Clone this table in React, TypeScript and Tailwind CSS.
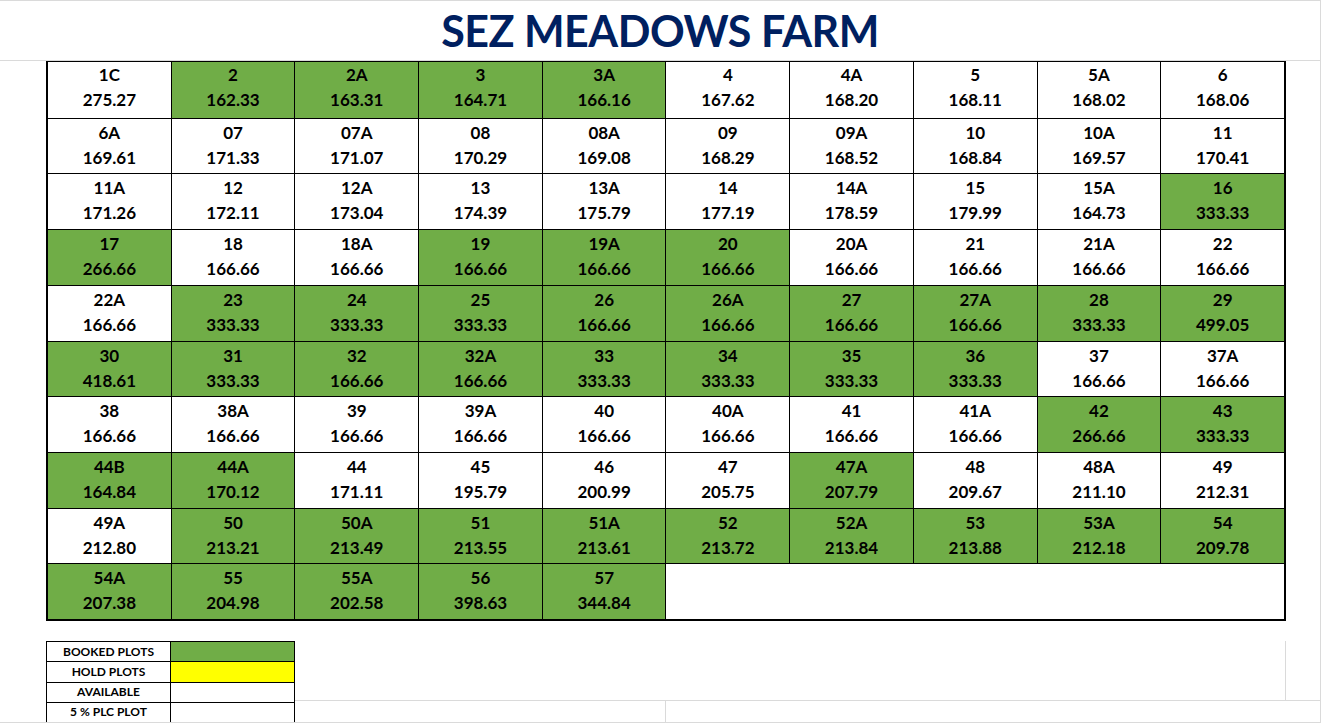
import React from 'react'

type Plot = { no: string; area: string; booked?: boolean }

const G = true

const rows: Plot[][] = [
  [
    { no: '1C', area: '275.27' },
    { no: '2', area: '162.33', booked: G },
    { no: '2A', area: '163.31', booked: G },
    { no: '3', area: '164.71', booked: G },
    { no: '3A', area: '166.16', booked: G },
    { no: '4', area: '167.62' },
    { no: '4A', area: '168.20' },
    { no: '5', area: '168.11' },
    { no: '5A', area: '168.02' },
    { no: '6', area: '168.06' },
  ],
  [
    { no: '6A', area: '169.61' },
    { no: '07', area: '171.33' },
    { no: '07A', area: '171.07' },
    { no: '08', area: '170.29' },
    { no: '08A', area: '169.08' },
    { no: '09', area: '168.29' },
    { no: '09A', area: '168.52' },
    { no: '10', area: '168.84' },
    { no: '10A', area: '169.57' },
    { no: '11', area: '170.41' },
  ],
  [
    { no: '11A', area: '171.26' },
    { no: '12', area: '172.11' },
    { no: '12A', area: '173.04' },
    { no: '13', area: '174.39' },
    { no: '13A', area: '175.79' },
    { no: '14', area: '177.19' },
    { no: '14A', area: '178.59' },
    { no: '15', area: '179.99' },
    { no: '15A', area: '164.73' },
    { no: '16', area: '333.33', booked: G },
  ],
  [
    { no: '17', area: '266.66', booked: G },
    { no: '18', area: '166.66' },
    { no: '18A', area: '166.66' },
    { no: '19', area: '166.66', booked: G },
    { no: '19A', area: '166.66', booked: G },
    { no: '20', area: '166.66', booked: G },
    { no: '20A', area: '166.66' },
    { no: '21', area: '166.66' },
    { no: '21A', area: '166.66' },
    { no: '22', area: '166.66' },
  ],
  [
    { no: '22A', area: '166.66' },
    { no: '23', area: '333.33', booked: G },
    { no: '24', area: '333.33', booked: G },
    { no: '25', area: '333.33', booked: G },
    { no: '26', area: '166.66', booked: G },
    { no: '26A', area: '166.66', booked: G },
    { no: '27', area: '166.66', booked: G },
    { no: '27A', area: '166.66', booked: G },
    { no: '28', area: '333.33', booked: G },
    { no: '29', area: '499.05', booked: G },
  ],
  [
    { no: '30', area: '418.61', booked: G },
    { no: '31', area: '333.33', booked: G },
    { no: '32', area: '166.66', booked: G },
    { no: '32A', area: '166.66', booked: G },
    { no: '33', area: '333.33', booked: G },
    { no: '34', area: '333.33', booked: G },
    { no: '35', area: '333.33', booked: G },
    { no: '36', area: '333.33', booked: G },
    { no: '37', area: '166.66' },
    { no: '37A', area: '166.66' },
  ],
  [
    { no: '38', area: '166.66' },
    { no: '38A', area: '166.66' },
    { no: '39', area: '166.66' },
    { no: '39A', area: '166.66' },
    { no: '40', area: '166.66' },
    { no: '40A', area: '166.66' },
    { no: '41', area: '166.66' },
    { no: '41A', area: '166.66' },
    { no: '42', area: '266.66', booked: G },
    { no: '43', area: '333.33', booked: G },
  ],
  [
    { no: '44B', area: '164.84', booked: G },
    { no: '44A', area: '170.12', booked: G },
    { no: '44', area: '171.11' },
    { no: '45', area: '195.79' },
    { no: '46', area: '200.99' },
    { no: '47', area: '205.75' },
    { no: '47A', area: '207.79', booked: G },
    { no: '48', area: '209.67' },
    { no: '48A', area: '211.10' },
    { no: '49', area: '212.31' },
  ],
  [
    { no: '49A', area: '212.80' },
    { no: '50', area: '213.21', booked: G },
    { no: '50A', area: '213.49', booked: G },
    { no: '51', area: '213.55', booked: G },
    { no: '51A', area: '213.61', booked: G },
    { no: '52', area: '213.72', booked: G },
    { no: '52A', area: '213.84', booked: G },
    { no: '53', area: '213.88', booked: G },
    { no: '53A', area: '212.18', booked: G },
    { no: '54', area: '209.78', booked: G },
  ],
  [
    { no: '54A', area: '207.38', booked: G },
    { no: '55', area: '204.98', booked: G },
    { no: '55A', area: '202.58', booked: G },
    { no: '56', area: '398.63', booked: G },
    { no: '57', area: '344.84', booked: G },
  ],
]

const Cell = ({ plot, first }: { plot: Plot; first: boolean }) => (
  <div
    className={
      'flex flex-col items-center text-[17px] font-bold leading-[25px] text-black ' +
      (first ? '-mt-px ' : 'pt-px ') +
      (plot.booked ? 'bg-[#70ad47]' : 'bg-white')
    }
  >
    <span>{plot.no}</span>
    <span>{plot.area}</span>
  </div>
)

const legend = [
  { label: 'BOOKED PLOTS', color: 'bg-[#70ad47]' },
  { label: 'HOLD PLOTS', color: 'bg-[#ffff00]' },
  { label: 'AVAILABLE', color: 'bg-white' },
  { label: '5 % PLC PLOT', color: 'bg-white' },
]

export default function App() {
  return (
    <div className="flex h-[723px] w-[1321px] flex-col border-t border-r border-b border-[#dadada] bg-white font-['Lato','Open_Sans',sans-serif]">
      {/* title */}
      <div className="flex h-[60px] shrink-0 items-center justify-center border-b border-[#dadada]">
        <h1 className="text-[43px] font-bold leading-none tracking-[-0.5px] text-[#002060]">SEZ MEADOWS FARM</h1>
      </div>

      {/* plots */}
      <div className="pl-[46px]">
        <div className="grid h-[560px] w-[1240px] grid-cols-10 grid-rows-10 gap-px border-2 border-black bg-black">
          {rows.map((row, i) =>
            row.map((p) => <Cell key={i + '-' + p.no} plot={p} first={i === 0} />)
          )}
          <div className="col-span-5 bg-white" />
        </div>
      </div>

      {/* legend */}
      <div className="mt-[20px] flex flex-1">
        <div className="pl-[46px]">
          <div className="grid h-[81px] w-[249px] grid-cols-2 grid-rows-4 gap-px border border-b-0 border-black bg-black">
            {legend.map((l) => (
              <React.Fragment key={l.label}>
                <div className="flex items-center justify-center bg-white text-[12px] font-bold leading-none text-black">
                  {l.label}
                </div>
                <div className={l.color} />
              </React.Fragment>
            ))}
          </div>
        </div>
        <div className="flex flex-1 flex-col">
          <div className="flex h-[60px] border-b border-[#dadada]">
            <div className="w-[991px] border-r border-[#dadada]" />
          </div>
          <div className="flex flex-1">
            <div className="w-[371px] border-r border-[#dadada]" />
          </div>
        </div>
      </div>
    </div>
  )
}
